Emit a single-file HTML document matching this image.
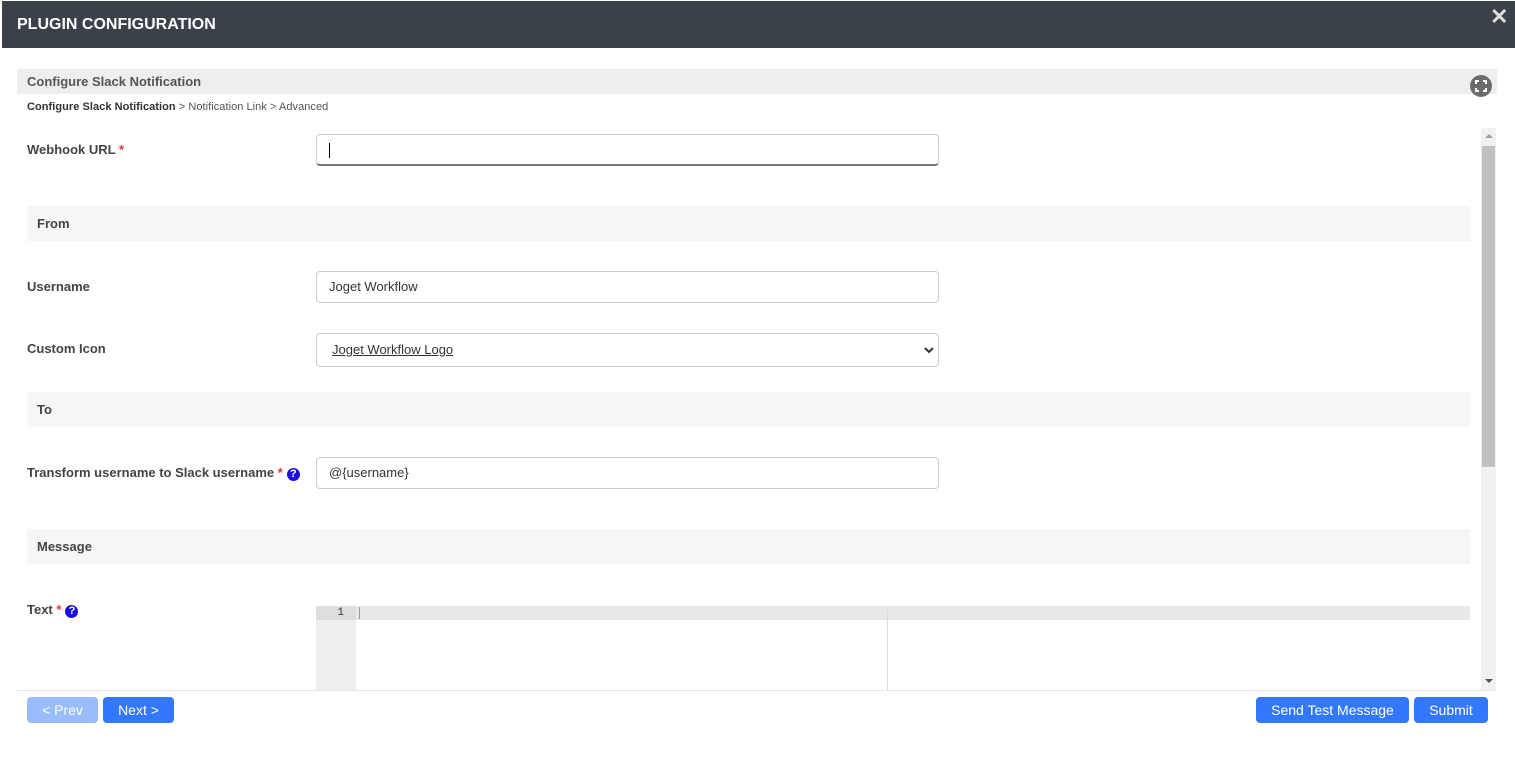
<!DOCTYPE html>
<html><head><style>
*{box-sizing:border-box;margin:0;padding:0}
body{width:1515px;height:772px;background:#fff;font-family:"Liberation Sans",Arial,sans-serif;position:relative;overflow:hidden;color:#444}
.abs{position:absolute}
.hdr{left:2px;top:1px;width:1513px;height:47px;background:#3a4149;color:#fff;font-weight:bold;font-size:16px;line-height:47px;padding-left:15px}
.lbl{left:27px;font-size:13px;font-weight:bold;color:#444}
.req{color:#e33}
.inp{left:316px;width:623px;height:32px;border:1px solid #ccc;border-radius:4px;font-size:13px;color:#333;padding-left:12px;line-height:30px}
.bar{left:27px;width:1443px;height:35px;background:#f5f6f6;font-size:13px;font-weight:bold;line-height:35px;padding-left:10px}
.q{display:inline-block;width:13px;height:13px;border-radius:50%;background:#1a0fe0;color:#fff;font-size:11px;line-height:13px;text-align:center;font-weight:bold;vertical-align:0px;margin-left:4px}
.btn{top:697px;height:26px;border-radius:4px;background:#3378fc;color:#fff;font-size:14px;line-height:26px;text-align:center}
</style></head><body>
<div class="abs hdr">PLUGIN CONFIGURATION</div>
<div class="abs" style="left:1490px;top:4px;color:#ddd;font-size:22px;font-weight:bold">✕</div>
<div class="abs" style="left:17px;top:69px;width:1480px;height:25px;background:#eee;font-size:13px;font-weight:bold;line-height:25px;padding-left:10px;color:#555">Configure Slack Notification</div>
<div class="abs" style="left:1470px;top:75px;width:22px;height:22px;border-radius:50%;background:#6b6b6b">
<svg width="22" height="22" viewBox="0 0 22 22" fill="none" stroke="#fff" stroke-width="2"><path d="M6 9V6h3M13 6h3v3M16 13v3h-3M9 16H6v-3"/></svg></div>
<div class="abs" style="left:27px;top:101px;font-size:11px;color:#555;letter-spacing:0.05px"><b style="color:#333">Configure Slack Notification</b> &gt; Notification Link &gt; Advanced</div>
<div class="abs" style="left:1481px;top:128px;width:15px;height:562px;background:#f1f1f1"></div>
<div class="abs" style="left:1482px;top:146px;width:13px;height:321px;background:#c1c1c1"></div>
<div class="abs" style="left:1485px;top:134px;border:4px solid transparent;border-bottom-color:#a0a0a0;border-top:0"></div>
<div class="abs" style="left:1485px;top:679px;border:4px solid transparent;border-top-color:#505050;border-bottom:0"></div>

<div class="abs lbl" style="top:142px">Webhook URL <span class="req">*</span></div>
<div class="abs inp" style="top:134px;border-bottom:2px solid #777"><span style="display:inline-block;width:1px;height:15px;background:#000;vertical-align:middle"></span></div>
<div class="abs bar" style="top:206px">From</div>
<div class="abs lbl" style="top:279px">Username</div>
<div class="abs inp" style="top:271px">Joget Workflow</div>
<div class="abs lbl" style="top:341px">Custom Icon</div>
<div class="abs inp" style="top:333px;height:34px;line-height:32px;padding-left:15px"><span style="text-decoration:underline">Joget Workflow Logo</span>
<svg class="abs" style="right:4px;top:12px" width="10" height="8" viewBox="0 0 10 8"><path d="M1 2l4 4 4-4" stroke="#333" stroke-width="2" fill="none"/></svg></div>
<div class="abs bar" style="top:392px">To</div>
<div class="abs lbl" style="top:465px">Transform username to Slack username <span class="req">*</span><span class="q">?</span></div>
<div class="abs inp" style="top:457px">@{username}</div>
<div class="abs bar" style="top:529px">Message</div>
<div class="abs lbl" style="top:602px">Text <span class="req">*</span><span class="q">?</span></div>
<div class="abs" style="left:316px;top:606px;width:40px;height:85px;background:#eee"></div>
<div class="abs" style="left:316px;top:606px;width:1154px;height:14px;background:#e8e8e8"></div>
<div class="abs" style="left:316px;top:606px;width:40px;height:14px;background:#ddd;font-family:'Liberation Mono',monospace;font-size:11px;text-align:right;padding-right:12px;line-height:14px;color:#333">1</div>
<div class="abs" style="left:359px;top:607px;width:1px;height:12px;background:#999"></div>
<div class="abs" style="left:887px;top:606px;width:1px;height:85px;background:#ddd"></div>
<div class="abs" style="left:17px;top:690px;width:1480px;height:1px;background:#e6e6e6"></div>
<div class="abs btn" style="left:27px;width:71px;background:#99bcfd">&lt; Prev</div>
<div class="abs btn" style="left:103px;width:71px">Next &gt;</div>
<div class="abs btn" style="left:1256px;width:153px">Send Test Message</div>
<div class="abs btn" style="left:1414px;width:74px">Submit</div>
</body></html>
